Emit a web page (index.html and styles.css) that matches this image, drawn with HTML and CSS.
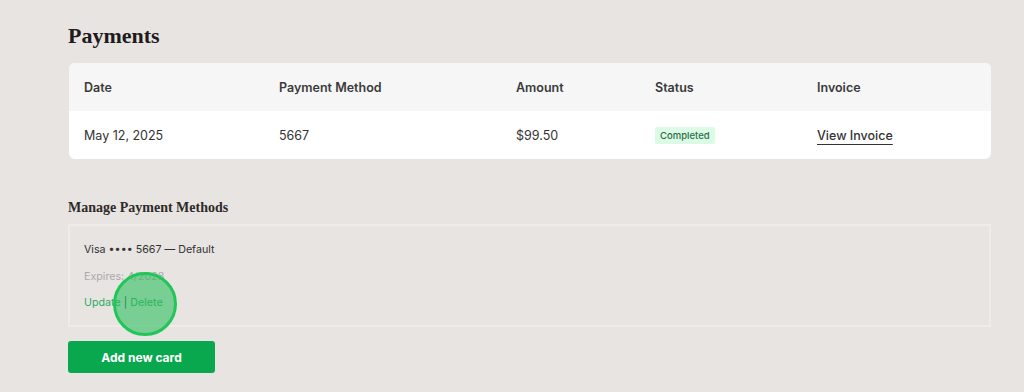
FILE: index.html
```html
<!DOCTYPE html>
<html>
<head>
    <title>Payments</title>
    <link rel="stylesheet" href="styles.css">
</head>
<body>
    <div class="page">
        <h2 class="title">Payments</h2>
        <div class="table-box">
            <table>
                <colgroup>
                    <col style="width: 195px">
                    <col style="width: 237px">
                    <col style="width: 139px">
                    <col style="width: 162px">
                    <col>
                </colgroup>
                <thead>
                    <tr>
                        <th>Date</th>
                        <th>Payment Method</th>
                        <th>Amount</th>
                        <th>Status</th>
                        <th>Invoice</th>
                    </tr>
                </thead>
                <tbody>
                    <tr>
                        <td>May 12, 2025</td>
                        <td>5667</td>
                        <td>$99.50</td>
                        <td><span class="badge">Completed</span></td>
                        <td><a class="invoice-link" href="#">View Invoice</a></td>
                    </tr>
                </tbody>
            </table>
        </div>

        <h3 class="subtitle">Manage Payment Methods</h3>
        <div class="card">
            <div class="card-line">Visa &bull;&bull;&bull;&bull; 5667 &mdash; Default</div>
            <div class="card-line muted">Expires: 4/2028</div>
            <div class="card-line actions">
                <a href="#">Update</a> <span class="sep">|</span> <a href="#">Delete</a>
                <span class="tap"></span>
            </div>
        </div>
        <button class="add-btn">Add new card</button>
    </div>
</body>
</html>
```

FILE: styles.css
```css
body { margin: 0; background: #e8e4e2; font-family: Inter, "Liberation Sans", sans-serif; color: #333; }
.page { padding: 24px 33px 0 68px; }
.title { font-family: "Liberation Serif", serif; font-weight: bold; font-size: 22px; color: #1e1b1a; margin: 0 0 15px 0; line-height: 24px; }
.table-box { margin-left: 1px; background: white; border-radius: 6px; overflow: hidden; }
table { width: 100%; border-collapse: collapse; table-layout: fixed; }
th, td { text-align: left; padding: 0 15px; height: 48px; font-size: 12.5px; }
th { background: #f6f6f6; font-weight: 600; color: #3a3a3a; }
td { color: #333; }
.badge { display: inline-block; background: #dcfbe6; color: #2d6b45; font-size: 9.5px; font-weight: 500; padding: 3px 5px; border-radius: 2px; line-height: 11px; }
.invoice-link { color: #333; font-weight: 500; text-decoration: underline; text-decoration-thickness: 1px; text-underline-offset: 4px; }
.subtitle { font-family: "Liberation Serif", serif; font-weight: bold; font-size: 14px; color: #2e2a28; margin: 41px 0 8px 0; line-height: 16px; }
.card { border: 2px solid #eeebe9; padding: 17px 14px 0 14px; height: 82px; }
.card-line { font-size: 10.7px; line-height: 13px; color: #333; margin-bottom: 13.5px; position: relative; }
.muted { color: #aaa; }
.actions a { color: #2eaa5e; text-decoration: none; }
.actions .sep { color: #333; }
.tap { position: absolute; left: 29px; top: -24px; width: 58px; height: 58px; border-radius: 50%; border: 3px solid #22c55a; background: rgba(40, 190, 90, 0.58); }
.add-btn { margin-top: 14px; width: 147px; height: 32px; background: #0aa84e; color: white; border: none; border-radius: 3px; font-family: Inter, "Liberation Sans", sans-serif; font-weight: bold; font-size: 12px; cursor: pointer; }
```
